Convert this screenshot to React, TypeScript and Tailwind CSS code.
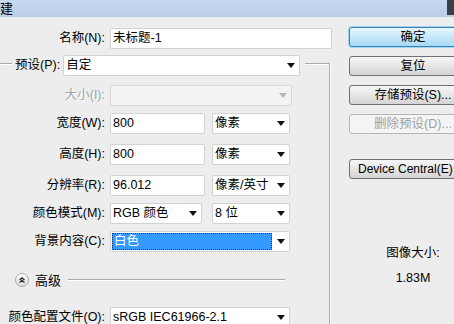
import type { ReactNode } from "react"

const font = "font-['Liberation_Sans','Noto_Sans_CJK_SC',sans-serif]"

function Arrow({ disabled }: { disabled?: boolean }) {
    return (
        <svg width="8" height="5" viewBox="0 0 8 5" className="shrink-0">
            <path d="M0 0 H8 L4 5 Z" fill={disabled ? "#b4b4b4" : "#111"} />
        </svg>
    )
}

function TextBox({ w, value }: { w: string; value: string }) {
    return (
        <div className={`${w} h-[21px] bg-white border border-[#d2d2d2] rounded-[2px] flex items-center pl-[2px] shrink-0`}>
            {value}
        </div>
    )
}

function Select({ w, value, disabled, selected }: { w: string; value: string; disabled?: boolean; selected?: boolean }) {
    return (
        <div
            className={`${w} h-[21px] border rounded-[2px] flex items-center justify-between pr-[4px] shrink-0
                ${disabled ? "bg-[#f3f3f3] border-[#d8d8d8]" : "bg-white border-[#d2d2d2]"}`}
        >
            {selected ? (
                <div className="ml-[1px] h-[17px] w-[160px] bg-[#3399ff] border border-dotted border-[#1a3a66] text-white flex items-center pl-[1px]">
                    {value}
                </div>
            ) : (
                <span className="pl-[2px]">{value}</span>
            )}
            <Arrow disabled={disabled} />
        </div>
    )
}

function Row({ label, children, mt, disabled }: { label: string; children: ReactNode; mt: string; disabled?: boolean }) {
    return (
        <div className={`flex items-center h-[21px] ${mt}`}>
            <div className={`w-[105px] text-right shrink-0 ${disabled ? "text-[#a3a3a3] [text-shadow:1px_1px_0_#fff]" : ""}`}>
                {label}
            </div>
            <div className="ml-[5px] flex items-center gap-[7px]">{children}</div>
        </div>
    )
}

function Button({ text, primary, disabled, mt, wide }: { text: string; primary?: boolean; disabled?: boolean; mt: string; wide?: boolean }) {
    let look = "border-[#707070] bg-gradient-to-b from-[#f6f6f6] via-[#e6e6e6] to-[#d4d4d4]"
    if (primary) look = "border-[#3c7fb1] bg-gradient-to-b from-[#eaf6fd] via-[#c7e8fa] to-[#a7d9f5] shadow-[0_0_0_1px_#9fd4f2]"
    if (disabled) look = "border-[#b5b5b5] bg-[#f4f4f4] text-[#a0a0a0]"
    return (
        <div
            className={`${mt} ${wide ? "w-[110px] justify-start pl-[8px] text-[12px]" : "w-[128px] justify-center"} h-[20px] border rounded-[3px] flex items-center shrink-0 ${look}`}
        >
            {text}
        </div>
    )
}

export default function App() {
    return (
        <div className={`w-[454px] h-[324px] overflow-hidden bg-[#ededed] text-[12.5px] text-black leading-none ${font}`}>
            {/* Title bar */}
            <div className="h-[17px] flex items-start bg-gradient-to-b from-[#c6d9ef] to-[#b9cee8]">
                <span className="text-[13px] mt-[2px]">建</span>
                <div className="ml-auto w-[7px] h-[15px] bg-[#3a4048]" />
            </div>

            <div className="flex">
                {/* Left form */}
                <div className="w-[330px] shrink-0">
                    <Row label="名称(N):" mt="mt-[11px]">
                        <TextBox w="w-[222px]" value="未标题-1" />
                    </Row>

                    <div className="mt-[14px] border-t border-r border-[#a9a9a9] shadow-[inset_0_1px_0_#fff,1px_0_0_#fff] h-[300px]">
                        {/* Legend */}
                        <div className="-mt-[9px] ml-[12px] w-fit flex items-center h-[21px] bg-[#ededed] pl-[3px] pr-[5px]">
                            <span>预设(P):</span>
                            <div className="ml-[3px]">
                                <Select w="w-[237px]" value="自定" />
                            </div>
                        </div>

                        <Row label="大小(I):" mt="mt-[9px]" disabled>
                            <Select w="w-[182px]" value="" disabled />
                        </Row>
                        <Row label="宽度(W):" mt="mt-[7px]">
                            <TextBox w="w-[95px]" value="800" />
                            <Select w="w-[78px]" value="像素" />
                        </Row>
                        <Row label="高度(H):" mt="mt-[10px]">
                            <TextBox w="w-[95px]" value="800" />
                            <Select w="w-[78px]" value="像素" />
                        </Row>
                        <Row label="分辨率(R):" mt="mt-[10px]">
                            <TextBox w="w-[95px]" value="96.012" />
                            <Select w="w-[78px]" value="像素/英寸" />
                        </Row>
                        <Row label="颜色模式(M):" mt="mt-[7px]">
                            <Select w="w-[92px]" value="RGB 颜色" />
                            <div className="ml-[3px]">
                                <Select w="w-[78px]" value="8 位" />
                            </div>
                        </Row>
                        <Row label="背景内容(C):" mt="mt-[7px]">
                            <Select w="w-[180px]" value="白色" selected />
                        </Row>

                        {/* Advanced */}
                        <div className="mt-[21px] flex items-center h-[14px] pl-[15px]">
                            <svg width="14" height="14" viewBox="0 0 14 14" className="shrink-0">
                                <defs>
                                    <linearGradient id="g" x1="0" y1="0" x2="0" y2="1">
                                        <stop offset="0" stopColor="#ffffff" />
                                        <stop offset="1" stopColor="#d9d9d9" />
                                    </linearGradient>
                                </defs>
                                <circle cx="7" cy="7" r="6.5" fill="url(#g)" stroke="#a8a8a8" />
                                <path d="M4.5 7 L7 4.8 L9.5 7 M4.5 9.6 L7 7.4 L9.5 9.6" fill="none" stroke="#222" strokeWidth="1.2" />
                            </svg>
                            <span className="ml-[6px] text-[13px]">高级</span>
                            <div className="ml-[7px] w-[217px] h-[2px] border-t border-[#a9a9a9] bg-white" />
                        </div>

                        <Row label="颜色配置文件(O):" mt="mt-[20px]">
                            <Select w="w-[180px]" value="sRGB IEC61966-2.1" />
                        </Row>
                    </div>
                </div>

                {/* Right buttons */}
                <div className="ml-[19px] flex flex-col items-start shrink-0 w-[128px]">
                    <Button text="确定" primary mt="mt-[10px]" />
                    <Button text="复位" mt="mt-[9px]" />
                    <Button text="存储预设(S)..." mt="mt-[9px]" />
                    <Button text="删除预设(D)..." disabled mt="mt-[9px]" />
                    <Button text="Device Central(E)" mt="mt-[25px]" wide />
                    <div className="self-center mt-[68px] text-[12.5px]">图像大小:</div>
                    <div className="self-center mt-[12px]">1.83M</div>
                </div>
            </div>
        </div>
    )
}
